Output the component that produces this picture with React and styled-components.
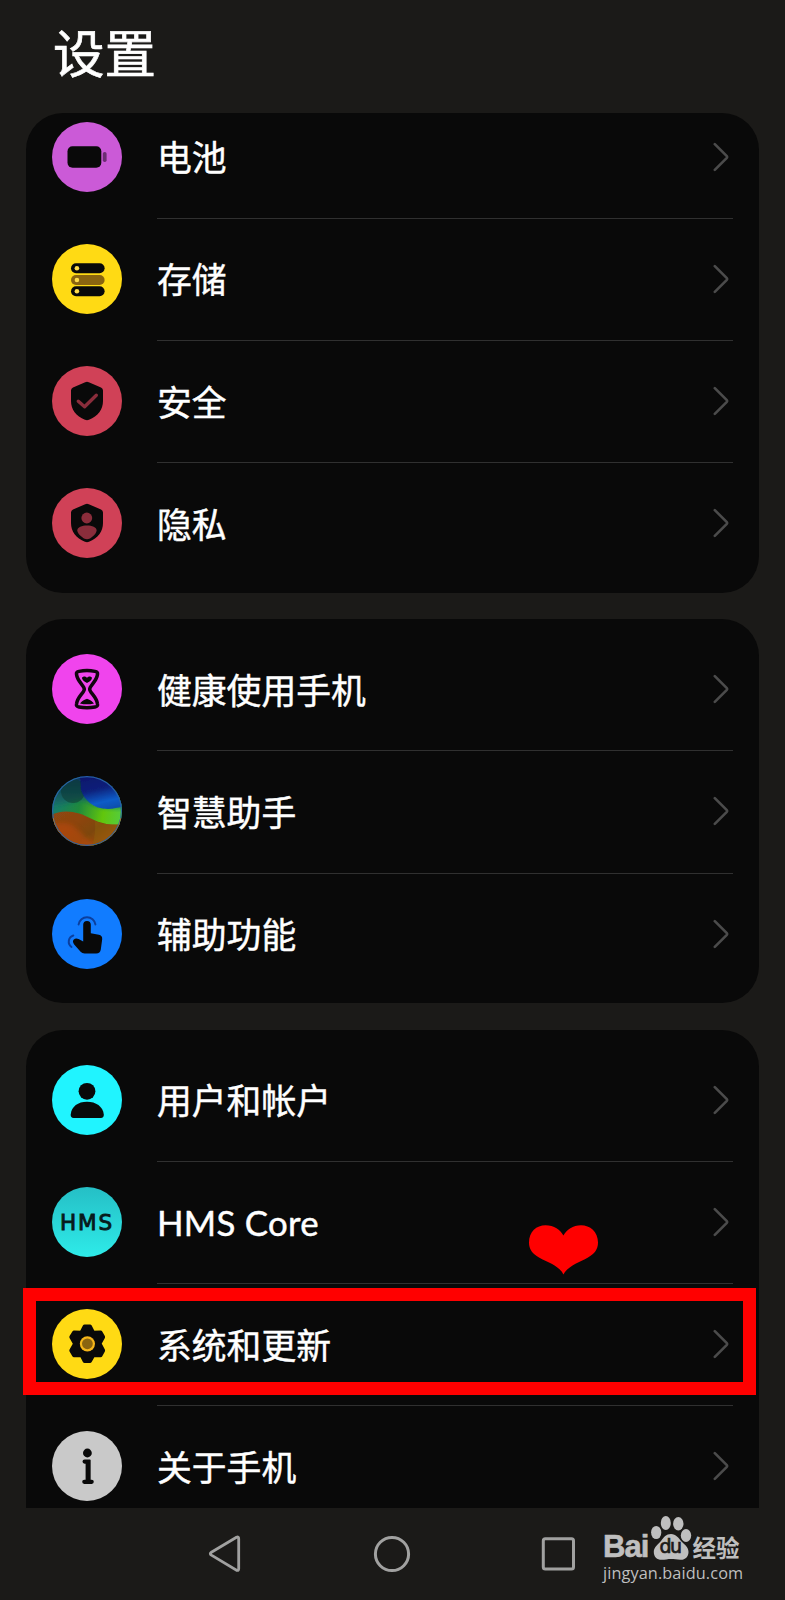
import React from "react";
import styled, { createGlobalStyle, css } from "styled-components";

const GlobalStyle = createGlobalStyle`
  * {
    box-sizing: border-box;
  }

  body {
    margin: 0;
    background-color: #1b1a18;
  }
`;

const Screen = styled.div`
  position: relative;
  width: 785px;
  height: 1600px;
  overflow: hidden;
  background-color: #1b1a18;
  color: #ffffff;
  font-family: Lato, "Noto Sans CJK SC", sans-serif;

  display: flex;
  flex-direction: column;
`;

const Header = styled.header`
  flex: 0 0 113px;
  padding: 16px 0 0 53px;
`;

const Title = styled.h1`
  margin: 0;
  font-size: 51.5px;
  line-height: 74px;
  font-weight: 400;
  -webkit-text-stroke: 0.7px #ffffff;
`;

const Content = styled.main`
  flex: 0 0 1395px;
  padding: 0 26px;
  overflow: hidden;

  display: flex;
  flex-direction: column;
  gap: 26.4px;
`;

const Card = styled.ul`
  list-style-type: none;
  margin: 0;
  padding: 8.6px 0;
  flex: none;
  border-radius: 37px;
  background-color: #090909;

  display: flex;
  flex-direction: column;

  &:last-child {
    border-radius: 37px 37px 0 0;
  }

  ${props =>
    props.$scrolled &&
    css`
      padding-top: 0;

      & > li:first-child {
        margin-top: -17.5px;
      }
    `}
`;

const Row = styled.li`
  position: relative;
  flex: none;
  height: 122.25px;
  padding-left: 26px;

  display: flex;
`;

const IconCircle = styled.span`
  flex: none;
  align-self: center;
  width: 70px;
  height: 70px;
  margin-right: 35px;
  border-radius: 50%;
  overflow: hidden;
  background: ${props => props.$color};

  svg {
    display: block;
  }
`;

const RowBody = styled.div`
  flex: 1;
  margin: 0 26px -1px 0;
  padding-right: 4.5px;
  border-bottom: 1px solid ${props => (props.$last ? "transparent" : "#303030")};

  display: flex;
  justify-content: space-between;
  align-items: center;
`;

const Label = styled.span`
  font-size: 34.8px;
  line-height: 50px;
  white-space: nowrap;
  padding-top: 3px;
  letter-spacing: ${props => (props.$latin ? "0.3px" : "0")};
  -webkit-text-stroke: 0.45px #ffffff;
`;

const Chevron = styled.svg`
  display: block;
  width: 16px;
  height: 30px;
`;

const HmsText = styled.span`
  display: block;
  font-family: "DejaVu Sans", sans-serif;
  font-size: 21.5px;
  line-height: 72px;
  letter-spacing: 1.9px;
  padding-left: 8px;
  color: #071a1b;
  -webkit-text-stroke: 0.9px #071a1b;
`;

const Highlight = styled.div`
  position: absolute;
  left: -2.6px;
  top: 5.5px;
  width: 732.3px;
  height: 107px;
  border: 13px solid #ff0000;
`;

const Heart = styled.svg`
  position: absolute;
  left: 502px;
  top: 63px;
  width: 71px;
  height: 51px;
`;

const NavBar = styled.nav`
  flex: 1;
  padding-left: 207.5px;

  display: flex;
  align-items: center;
`;

const NavButton = styled.span`
  width: ${props => props.$width};

  svg {
    display: block;
  }
`;

const Watermark = styled.div`
  position: absolute;
  left: 603px;
  top: 1514px;
  width: 142px;
  color: #bfbfbf;
`;

const WatermarkLogo = styled.div`
  height: 46px;

  display: flex;
  align-items: flex-end;
`;

const Bai = styled.span`
  width: 47.5px;
  font-family: "Liberation Sans", sans-serif;
  font-weight: 700;
  font-size: 31px;
  line-height: 26px;
  letter-spacing: -0.9px;
  -webkit-text-stroke: 0.6px #bfbfbf;
`;

const Paw = styled.span`
  position: relative;
  width: 42px;
  height: 46px;

  svg {
    display: block;
  }
`;

const Du = styled.span`
  position: absolute;
  left: 9px;
  top: 21px;
  font-family: "DejaVu Sans", sans-serif;
  font-size: 19px;
  line-height: 22px;
  letter-spacing: -1.6px;
  color: #1b1a18;
  -webkit-text-stroke: 0.7px #1b1a18;
`;

const Jingyan = styled.span`
  font-family: "Noto Sans CJK SC", sans-serif;
  font-weight: 700;
  font-size: 23.5px;
  line-height: 26px;
`;

const WatermarkUrl = styled.div`
  padding-top: 1.5px;
  font-family: "Open Sans", sans-serif;
  font-size: 16.3px;
  line-height: 22px;
  letter-spacing: 0.1px;
  white-space: nowrap;
`;

const Glyph = ({ children }) => (
  <svg width="70" height="70" viewBox="0 0 70 70" fill="#090909">
    {children}
  </svg>
);

const BatteryIcon = () => (
  <Glyph>
    <rect x="15.5" y="24.3" width="33.8" height="21.5" rx="5" />
    <rect x="50.8" y="30" width="3.8" height="10" rx="1.8" fill="#6b2d72" />
  </Glyph>
);

const StorageIcon = () => (
  <Glyph>
    <rect x="19" y="19.3" width="33.6" height="10" rx="5" />
    <rect x="19" y="31" width="33.6" height="10" rx="5" fill="#8a6410" />
    <rect x="19" y="42.2" width="33.6" height="10" rx="5" />
    <g fill="#ffdc4a">
      <circle cx="24.9" cy="24.3" r="2.3" />
      <circle cx="24.9" cy="36" r="2.3" />
      <circle cx="24.9" cy="47.2" r="2.3" />
    </g>
  </Glyph>
);

const SHIELD =
  "M33.2 16.2Q35 15.2 36.8 16.2L49 21.4Q51 22.3 51 24.5V35C51 43.5 46 50.2 37 53.7Q35 54.6 33 53.7C24 50.2 19 43.5 19 35V24.5Q19 22.3 21 21.4Z";

const SecurityIcon = () => (
  <Glyph>
    <path d={SHIELD} />
    <path
      d="M26.3 35.2 32.6 40.7 44.3 29.3"
      fill="none"
      stroke="#8a2d3b"
      strokeWidth="3.4"
      strokeLinecap="round"
      strokeLinejoin="round"
    />
  </Glyph>
);

const PrivacyIcon = () => (
  <Glyph>
    <path d={SHIELD} />
    <g fill="#8a2d3b">
      <circle cx="34.8" cy="30" r="5.4" />
      <path d="M35 37.6C40 37.6 44.6 39.4 44.6 42.4C44.6 45.6 38.7 51.2 35 51.2S25.3 45.6 25.3 42.4C25.3 39.4 30 37.6 35 37.6Z" />
    </g>
  </Glyph>
);

const HourglassIcon = () => (
  <Glyph>
    <path
      d="M27 17.4Q35 15.8 43 17.4Q46 18 45.5 20.3C44.7 27.6 37.7 31.7 37.7 35.2S44.7 42.7 45.5 50Q46 52.5 43 53Q35 54.4 27 53Q24 52.5 24.5 50C25.3 42.7 32.3 38.7 32.3 35.2S25.3 27.6 24.5 20.3Q24 18 27 17.4Z"
      fill="none"
      stroke="#12050f"
      strokeWidth="3.5"
    />
    <path d="M35 23.8C37 21.5 41.2 22.4 39.6 25.2C38.6 26.9 36.6 28.1 35 29C33.4 28.1 31.4 26.9 30.4 25.2C28.8 22.4 33 21.5 35 23.8Z" />
    <path d="M28 49.5C31 46 34 45.3 35 44.8C36 45.3 39 46 42 49.5Q35 51.2 28 49.5Z" />
  </Glyph>
);

const AssistantIcon = () => (
  <Glyph>
    <defs>
      <linearGradient id="night" x1="0.3" y1="0" x2="0.6" y2="1">
        <stop offset="0" stopColor="#0b1568" />
        <stop offset="0.45" stopColor="#08207a" />
        <stop offset="0.8" stopColor="#0a5cc8" />
        <stop offset="1" stopColor="#0a4fae" />
      </linearGradient>
      <linearGradient id="forest" x1="0.3" y1="0" x2="0.3" y2="1">
        <stop offset="0" stopColor="#122c6e" />
        <stop offset="0.4" stopColor="#0f3f58" />
        <stop offset="1" stopColor="#167868" />
      </linearGradient>
      <linearGradient id="meadow" x1="0" y1="0.3" x2="1" y2="0.5">
        <stop offset="0" stopColor="#167a72" />
        <stop offset="0.4" stopColor="#1f8a3c" />
        <stop offset="0.75" stopColor="#62c60c" />
        <stop offset="1" stopColor="#55cc3c" />
      </linearGradient>
      <linearGradient id="sand" x1="0" y1="0.2" x2="0.9" y2="0.8">
        <stop offset="0" stopColor="#8c4712" />
        <stop offset="0.3" stopColor="#8e4410" />
        <stop offset="0.6" stopColor="#7d470e" />
        <stop offset="1" stopColor="#b8520f" />
      </linearGradient>
      <filter id="soft">
        <feGaussianBlur stdDeviation="2.6" />
      </filter>
      <filter id="edge">
        <feGaussianBlur stdDeviation="0.6" />
      </filter>
    </defs>
    <rect width="70" height="70" fill="url(#meadow)" />
    <path
      d="M-8 -8H78V32Q52 32 42 29Q32 22 22 25Q8 30 -8 30Z"
      fill="url(#forest)"
      filter="url(#soft)"
    />
    <circle cx="21" cy="15" r="12" fill="#0b3a30" opacity="0.55" filter="url(#edge)" />
    <g filter="url(#edge)">
      <path d="M27 -4H74V29C60 35 46 34 38 27Q31 21 29 14Q29 6 27 -4Z" fill="url(#night)" />
      <path d="M-4 41C10 32 25 35 40 43C52 49 60 49 74 48V74H-4Z" fill="url(#sand)" />
    </g>
    <path d="M-4 50Q14 42 26 54T50 74H-4Z" fill="#c04a10" opacity="0.55" filter="url(#soft)" />
    <path d="M40 70Q44 59 43 45Q55 50 70 48V70Z" fill="#8c600c" opacity="0.5" filter="url(#edge)" />
    <circle cx="35" cy="35" r="34.4" fill="none" stroke="#2a62a8" strokeWidth="1.1" />
    <path d="M1 42A34.4 34.4 0 0 0 69 42" fill="none" stroke="#b87828" strokeWidth="1.1" />
  </Glyph>
);

const AccessibilityIcon = () => (
  <Glyph>
    <path d="M31.2 25.8A3.8 3.8 0 0 1 38.8 25.8V34.3L46.8 35.8Q50.5 36.6 50.2 40.2L48.8 50.4Q48.2 54.4 44.2 54.4H32.6Q30.2 54.4 28.6 52.7L22.2 45.4Q20 42.6 21.8 40.6Q23.7 38.5 26.6 40L31.2 42.4Z" />
    <g fill="none" stroke="#0b3f9e" strokeWidth="2" strokeLinecap="round">
      <path d="M26.6 25.4A8.5 8.5 0 0 1 43.4 25.4" />
      <path d="M21.3 36.5A6.5 6.5 0 0 0 19.5 48" />
    </g>
  </Glyph>
);

const AccountIcon = () => (
  <Glyph>
    <circle cx="35" cy="26.3" r="8.4" />
    <path d="M18.7 49.5C19.5 41.5 26 36.8 35 36.8S50.9 41.5 51.8 49.5Q52 52.9 48.8 52.9H21.7Q18.4 52.9 18.7 49.5Z" />
  </Glyph>
);

const SystemIcon = () => (
  <Glyph>
    <path
      d="M32.6 17.4H38L41.2 23.6L48.6 23.4L51.2 28L47.6 34.7L51.2 41.5L48.6 46.4L41.4 46L38 52.2H32.6L29.4 46L22 46.4L19.2 41.5L23 34.7L19.2 28L22 23.4L29.4 23.6Z"
      stroke="#090909"
      strokeWidth="3.8"
      strokeLinejoin="round"
    />
    <circle cx="35.4" cy="34.8" r="7.6" fill="#f5b51a" />
    <circle cx="35.4" cy="34.8" r="5.4" fill="#8a6410" />
  </Glyph>
);

const InfoIcon = () => (
  <Glyph>
    <circle cx="35.4" cy="22" r="4.4" />
    <path
      d="M32.6 30.6H36.2V50.8M32.3 50.8H39.7"
      fill="none"
      stroke="#090909"
      strokeWidth="4.2"
      strokeLinecap="round"
    />
    <path d="M33.6 29H38.5V51H33.6Z" />
  </Glyph>
);

const HmsIcon = () => <HmsText>HMS</HmsText>;

const groups = [
  [
    { label: "电池", color: "#cb5ad7", Icon: BatteryIcon },
    { label: "存储", color: "#ffda14", Icon: StorageIcon },
    { label: "安全", color: "#d04157", Icon: SecurityIcon },
    { label: "隐私", color: "#d04157", Icon: PrivacyIcon }
  ],
  [
    { label: "健康使用手机", color: "#f044ed", Icon: HourglassIcon },
    { label: "智慧助手", color: "#102266", Icon: AssistantIcon },
    { label: "辅助功能", color: "#117cff", Icon: AccessibilityIcon }
  ],
  [
    { label: "用户和帐户", color: "#20f4ff", Icon: AccountIcon },
    {
      label: "HMS Core",
      color: "linear-gradient(#25bfc6, #2eebe9)",
      Icon: HmsIcon,
      latin: true,
      heart: true
    },
    { label: "系统和更新", color: "#ffda14", Icon: SystemIcon, highlighted: true },
    { label: "关于手机", color: "#c9c9c9", Icon: InfoIcon }
  ]
];

const SettingRow = ({ item, last }) => {
  const { label, color, Icon, latin, heart, highlighted } = item;

  return (
    <Row>
      <IconCircle $color={color}>
        <Icon />
      </IconCircle>
      <RowBody $last={last}>
        <Label $latin={latin}>{label}</Label>
        <Chevron viewBox="0 0 16 30" fill="none">
          <path
            d="M1.8 2.2 13.6 13.9Q14.6 15 13.6 16.1L1.8 27.8"
            stroke="#4b4b4b"
            strokeWidth="2.6"
            strokeLinecap="round"
          />
        </Chevron>
      </RowBody>
      {heart && (
        <Heart viewBox="0 0 71 51" fill="#ff0000">
          <path d="M35.4 50.4C31 41.5 20 38.5 11 33.5C4.5 29.8 1 25.5 1 18.5C1 7.5 8.5 1.2 17.5 1.2C26 1.2 32.5 5.5 35.4 11.5C38.5 5.5 45 1.2 53 1.2C62 1.2 70 7.5 70 18.5C70 25.5 66.5 29.8 60 33.5C51 38.5 40.5 41.5 35.4 50.4Z" />
        </Heart>
      )}
      {highlighted && <Highlight />}
    </Row>
  );
};

const Navigation = () => (
  <NavBar>
    <NavButton $width="165.5px">
      <svg width="34" height="40" viewBox="0 0 34 40" fill="none">
        <path
          d="M28.5 3.2 3.4 18.3Q1.2 19.7 3.4 21.1L28.5 36.3Q30.7 37 30.7 34.7V4.7Q30.7 2.3 28.5 3.2Z"
          stroke="#a1a1a0"
          strokeWidth="2.8"
        />
      </svg>
    </NavButton>
    <NavButton $width="168px">
      <svg width="38" height="38" viewBox="0 0 38 38" fill="none">
        <circle cx="19" cy="19" r="16.6" stroke="#a1a1a0" strokeWidth="3" />
      </svg>
    </NavButton>
    <NavButton $width="36px">
      <svg width="36" height="36" viewBox="0 0 36 36" fill="none">
        <rect x="2.3" y="2.8" width="30.2" height="30.2" rx="2" stroke="#a1a1a0" strokeWidth="3" />
      </svg>
    </NavButton>
  </NavBar>
);

const BaiduWatermark = () => (
  <Watermark>
    <WatermarkLogo>
      <Bai>Bai</Bai>
      <Paw>
        <svg width="42" height="46" viewBox="0 0 42 46" fill="#bfbfbf">
          <ellipse cx="5.2" cy="18.5" rx="5.1" ry="6.6" />
          <ellipse cx="14.8" cy="9" rx="5" ry="7" />
          <ellipse cx="27.3" cy="9.8" rx="5.2" ry="6.8" />
          <ellipse cx="35" cy="21.5" rx="5.2" ry="6.5" />
          <path d="M20 20C25 20 27.5 24 30.5 27.5C34 31 37.5 33 37.5 38C37.5 43 34 46 29.5 45.8C26 45.6 23 45 20 45S14 45.8 10.5 45.8C6 45.8 2.8 43 2.8 38C2.8 33 7 30.5 10 27C13 23 15 20 20 20Z" />
        </svg>
        <Du>du</Du>
      </Paw>
      <Jingyan>经验</Jingyan>
    </WatermarkLogo>
    <WatermarkUrl>jingyan.baidu.com</WatermarkUrl>
  </Watermark>
);

const App = () => {
  return (
    <Screen>
      <GlobalStyle />
      <Header>
        <Title>设置</Title>
      </Header>
      <Content>
        {groups.map((items, index) => (
          <Card key={index} $scrolled={index === 0}>
            {items.map((item, i) => (
              <SettingRow key={item.label} item={item} last={i === items.length - 1} />
            ))}
          </Card>
        ))}
      </Content>
      <Navigation />
      <BaiduWatermark />
    </Screen>
  );
};

export default App;
